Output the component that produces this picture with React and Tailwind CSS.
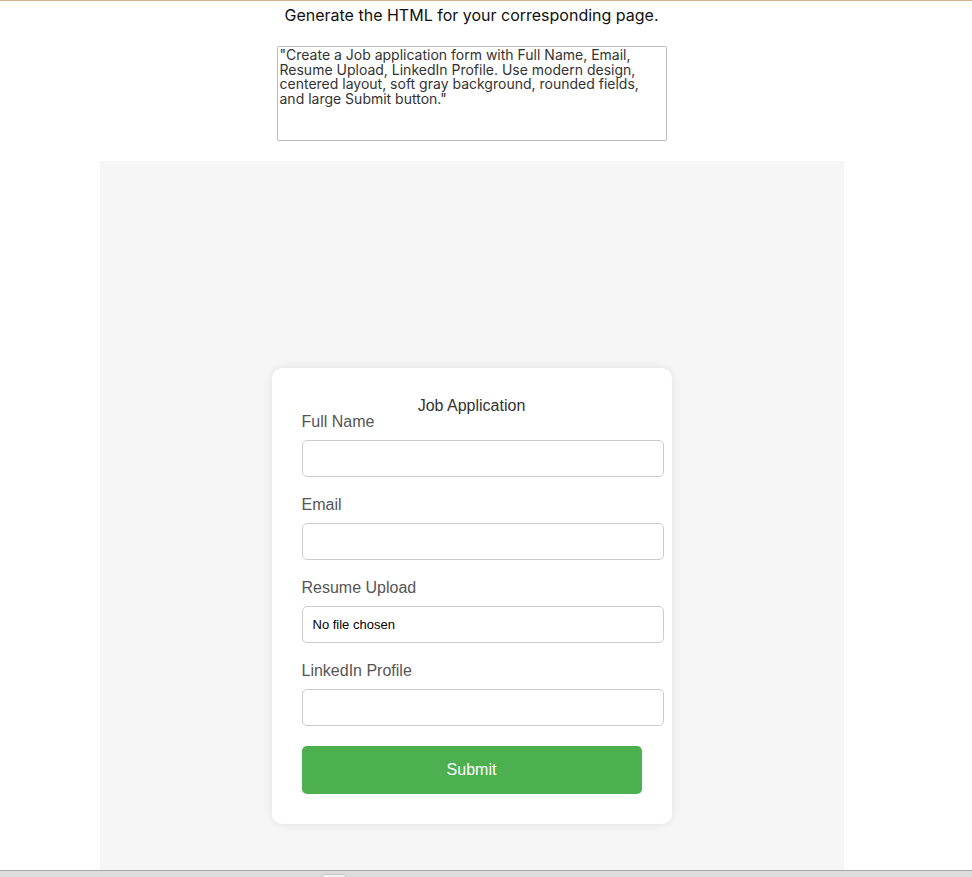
import React from 'react'

const PROMPT =
  '"Create a Job application form with Full Name, Email, Resume Upload, LinkedIn Profile. Use modern design, centered layout, soft gray background, rounded fields, and large Submit button."'

const FIELDS = ['Full Name', 'Email', 'Resume Upload', 'LinkedIn Profile']

function Field({ label, last }) {
  return (
    <div className={last ? '' : 'mb-[18px]'}>
      <label className="block text-[16px] leading-[20px] text-[#555] mb-[8px]">{label}</label>
      {label === 'Resume Upload' ? (
        <div className="w-[362px] h-[37px] border border-[#ccc] rounded-[5px] bg-white flex items-center pl-[10px] text-[13px] text-black">
          No file chosen
        </div>
      ) : (
        <input
          type="text"
          className="block w-[362px] h-[37px] border border-[#ccc] rounded-[5px] bg-white px-[10px] outline-none"
        />
      )}
    </div>
  )
}

export default function App() {
  return (
    <div className="w-[972px] h-[877px] overflow-hidden bg-white flex flex-col font-['Liberation_Sans',Arial,sans-serif]">
      <div className="h-px bg-[#d2b08a]" />

      <div className="w-[943px] flex flex-col items-center">
        <p className="mt-[4px] text-[16px] leading-[20px] text-[#111] font-['Inter',sans-serif]">
          Generate the HTML for your corresponding page.
        </p>
        <textarea
          readOnly
          defaultValue={PROMPT}
          className="mt-[21px] w-[390px] h-[95px] resize-none border border-[#bbb] rounded-[2px] px-[2px] pt-[1px] pb-0 text-[14px] leading-[14.5px] text-[#333] font-['Inter',sans-serif] outline-none"
        />

        <div className="mt-[20px] w-[744px] h-[709px] bg-[#f6f6f6] pt-[207px] flex justify-center">
          <div className="w-[400px] h-[456px] bg-white rounded-[10px] shadow-[0_0_10px_rgba(0,0,0,0.1)] p-[30px]">
            <div className="h-[14px] text-center text-[16px] leading-[16px] text-[#333]">Job Application</div>
            {FIELDS.map((f, i) => (
              <Field key={f} label={f} last={i === FIELDS.length - 1} />
            ))}
            <button
              type="button"
              className="mt-[20px] w-[340px] h-[48px] rounded-[5px] bg-[#4caf50] text-white text-[16px]"
            >
              Submit
            </button>
          </div>
        </div>
      </div>

      {/* horizontal scrollbar strip */}
      <div className="relative h-[7px] bg-[#dcdcdc] border-t border-[#a8a8a8]">
        <div className="absolute left-[322px] top-[3px] w-[24px] h-[6px] rounded-t-[3px] bg-[#f3f3f3] border border-[#c8c8c8]" />
      </div>
    </div>
  )
}
